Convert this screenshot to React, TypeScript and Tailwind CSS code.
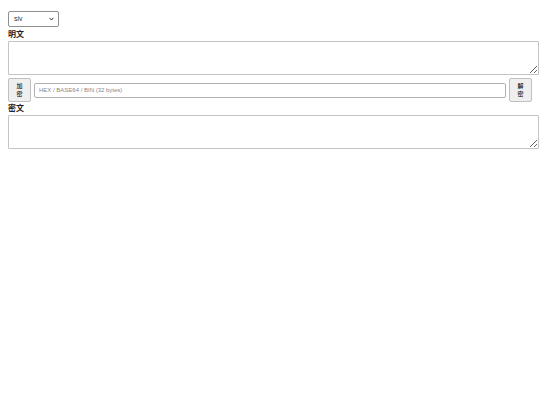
import React, { useState } from 'react';

const fontStack = '"Liberation Sans", "Noto Sans CJK SC", sans-serif';

const App = () => {
  const [mode, setMode] = useState('siv');
  const [plain, setPlain] = useState('');
  const [key, setKey] = useState('');
  const [cipher, setCipher] = useState('');

  return (
    <div className="p-2 bg-white min-h-[405px] text-black" style={{ fontFamily: fontStack }}>
      <div className="pt-[3px]">
        <div className="relative w-[51px] h-[16px]">
          <select
            value={mode}
            onChange={(e) => setMode(e.target.value)}
            className="block appearance-none w-[51px] h-[16px] text-[7px] text-[#333] border border-[#8f8f8f] rounded-[2px] bg-white pl-[5px]"
          >
            <option value="siv">siv</option>
            <option value="gcm">gcm</option>
            <option value="cbc">cbc</option>
          </select>
          {/* chevron */}
          <svg
            className="absolute right-[5px] top-[6px] pointer-events-none"
            width="5"
            height="4"
            viewBox="0 0 5 4"
          >
            <path d="M0.5 0.8 L2.5 3 L4.5 0.8" fill="none" stroke="#333" strokeWidth="1" />
          </svg>
        </div>
      </div>
      <div className="text-[8px] font-semibold leading-[10px] mt-[3px] text-[#222]">明文</div>
      <textarea
        value={plain}
        onChange={(e) => setPlain(e.target.value)}
        className="block w-[531px] h-[34px] mt-[1px] border border-[#c4c4c4] rounded-[1px] text-[8px]"
      />
      <div className="flex items-center gap-[3px] w-[524px] mt-[3px]">
        <button className="w-[23px] h-[24px] shrink-0 border border-[#c0c0c0] bg-[#efefef] rounded-[2px] text-[6px] leading-[8px] text-[#111] font-medium">
          加<br />密
        </button>
        <input
          value={key}
          onChange={(e) => setKey(e.target.value)}
          placeholder="HEX / BASE64 / BIN (32 bytes)"
          className="flex-1 h-[15px] border border-[#b0b0b0] rounded-[2px] px-[4px] text-[6px] placeholder:text-[#888]"
        />
        <button className="w-[23px] h-[24px] shrink-0 border border-[#c0c0c0] bg-[#efefef] rounded-[2px] text-[6px] leading-[8px] text-[#111] font-medium">
          解<br />密
        </button>
      </div>
      <div className="text-[8px] font-semibold leading-[10px] mt-[2px] text-[#222]">密文</div>
      <textarea
        value={cipher}
        onChange={(e) => setCipher(e.target.value)}
        className="block w-[531px] h-[34px] mt-[1px] border border-[#c4c4c4] rounded-[1px] text-[8px]"
      />
    </div>
  );
};

export default App;
